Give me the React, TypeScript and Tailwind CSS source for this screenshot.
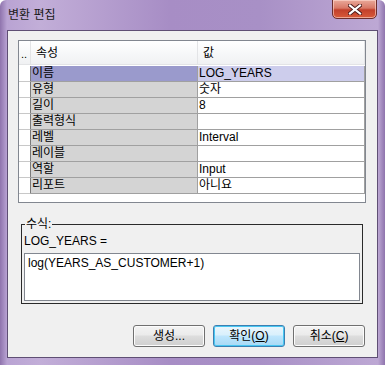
import React from "react";

const rows: { name: string; value: string; selected?: boolean }[] = [
  { name: "이름", value: "LOG_YEARS", selected: true },
  { name: "유형", value: "숫자" },
  { name: "길이", value: "8" },
  { name: "출력형식", value: "" },
  { name: "레벨", value: "Interval" },
  { name: "레이블", value: "" },
  { name: "역할", value: "Input" },
  { name: "리포트", value: "아니요" },
];

const font = { fontFamily: '"Liberation Sans", "Noto Sans CJK KR", sans-serif' };

export default function App() {
  return (
    <div
      className="w-[385px] h-[365px] flex flex-col rounded-t-[6px] overflow-hidden bg-[linear-gradient(90deg,#8f74ad_0px,#b9a3d3_7px,#c2aed8_40px,#a78dc5_170px,#a890c6_260px,#bda8d4_378px,#8f74ad_385px)] text-[12px] text-black"
      style={font}
    >
      {/* title bar */}
      <div className="h-[30px] flex items-start justify-between pl-[8px] pr-[8px] shrink-0">
        <div className="mt-[7px] text-[12px] leading-[16px] text-[#1a1a1a]">변환 편집</div>
        <div className="w-[45px] h-[20px] -mt-[1px] rounded-b-[5px] border border-[#6b2e2e] bg-[linear-gradient(180deg,#e9a99a_0%,#d87866_45%,#c2402b_55%,#d85a3a_100%)] flex items-center justify-center shadow-[inset_0_0_0_1px_rgba(255,220,210,0.6)]">
          <svg width="14" height="11" viewBox="0 0 14 11">
            <path d="M2 1.5 L12 9.5 M12 1.5 L2 9.5" stroke="#4a1a1a" strokeWidth="4" strokeLinecap="square" />
            <path d="M2 1.5 L12 9.5 M12 1.5 L2 9.5" stroke="#ffffff" strokeWidth="2.2" strokeLinecap="square" />
          </svg>
        </div>
      </div>

      {/* client area */}
      <div className="mx-[7px] mb-[7px] flex-1 border border-[#5f4f74] bg-[#f0f0f0] flex flex-col pl-[10px] pr-[11px] pt-[9px]">
        {/* property grid */}
        <div className="w-[348px] h-[163px] border border-[#828790] bg-white flex flex-col">
          <div className="h-[24px] flex bg-[linear-gradient(180deg,#ffffff_0%,#f7f8f9_50%,#f0f1f3_100%)] border-b border-[#e3e4e6]">
            <div className="w-[12px] pl-[2px] pt-[7px] leading-[12px] text-[11px] border-r border-[#e3e4e6]">..</div>
            <div className="w-[167px] pl-[5px] pt-[4px] leading-[16px] border-r border-[#e3e4e6]">속성</div>
            <div className="w-[167px] pl-[5px] pt-[4px] leading-[16px] border-r border-[#e3e4e6]">값</div>
          </div>
          <div className="mt-[1px] flex flex-col">
            {rows.map((r) => (
              <div key={r.name} className="h-[16px] flex">
                <div className="w-[12px] bg-white border-r border-[#7a7a7a] border-b border-b-[#c8c8c8]" />
                <div
                  className={`w-[167px] pl-[1px] leading-[15px] border-b border-r border-[#a0a0a0] ${
                    r.selected ? "bg-[#9a9acc]" : "bg-[#d4d4d4]"
                  }`}
                >
                  {r.name}
                </div>
                <div
                  className={`w-[167px] pl-[1px] leading-[15px] border-b border-r border-[#a0a0a0] ${
                    r.selected ? "bg-[#cdcdec]" : "bg-white"
                  }`}
                >
                  {r.value}
                </div>
              </div>
            ))}
          </div>
        </div>

        {/* formula group */}
        <div className="relative mt-[21px] ml-[3px] w-[342px] h-[80px] border border-[#2a2a2a] px-[2px]">
          <div className="absolute -top-[8px] left-[3px] bg-[#f0f0f0] px-[1px] leading-[14px]">수식:</div>
          <div className="mt-[9px] leading-[14px]">LOG_YEARS =</div>
          <div className="mt-[5px] h-[48px] w-[336px] border border-[#828790] bg-white pl-[3px] pt-[2px] leading-[14px]">
            log(YEARS_AS_CUSTOMER+1)
          </div>
        </div>

        {/* buttons */}
        <div className="mt-[21px] flex justify-end gap-[8px] pr-[1px]">
          <button className="w-[72px] h-[22px] rounded-[3px] border border-[#707070] bg-[linear-gradient(180deg,#f3f3f3_0%,#ebebeb_45%,#dddddd_50%,#cfcfcf_100%)] leading-[14px] shadow-[inset_0_0_0_1px_#fcfcfc]">
            생성...
          </button>
          <button className="w-[72px] h-[22px] rounded-[3px] border border-[#3c7fb1] bg-[linear-gradient(180deg,#eaf6fd_0%,#d9f0fc_45%,#bee6fd_50%,#a7d9f5_100%)] leading-[14px] shadow-[inset_0_0_0_1px_#48c7f2]">
            확인(<span className="underline">O</span>)
          </button>
          <button className="w-[72px] h-[22px] rounded-[3px] border border-[#707070] bg-[linear-gradient(180deg,#f3f3f3_0%,#ebebeb_45%,#dddddd_50%,#cfcfcf_100%)] leading-[14px] shadow-[inset_0_0_0_1px_#fcfcfc]">
            취소(<span className="underline">C</span>)
          </button>
        </div>
      </div>
    </div>
  );
}
